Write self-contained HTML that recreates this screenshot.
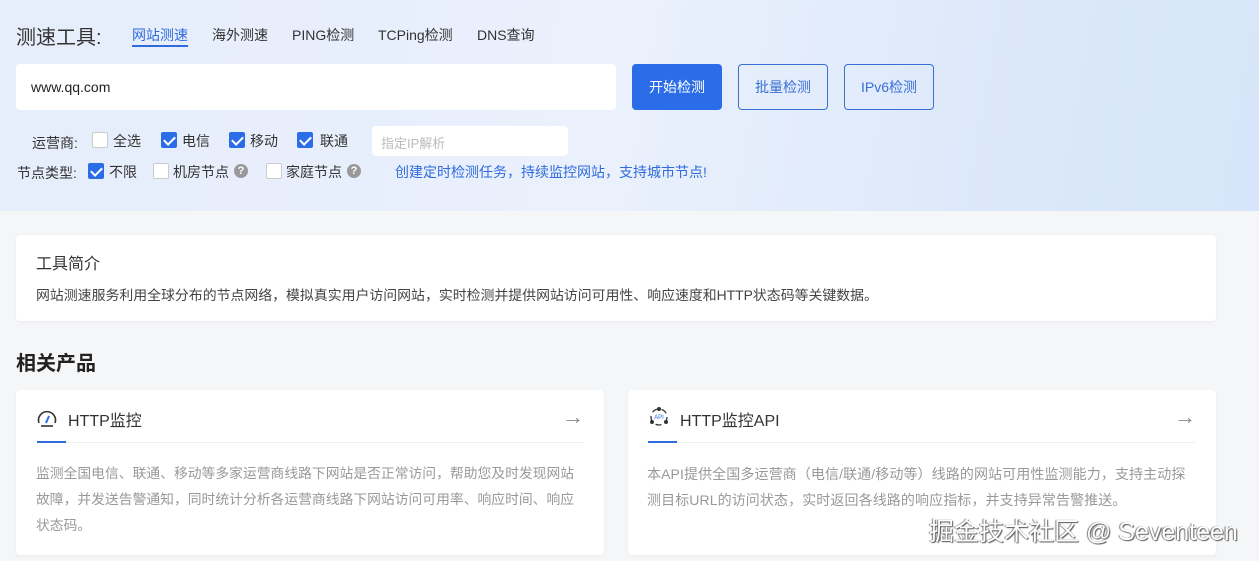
<!DOCTYPE html>
<html><head><meta charset="utf-8"><style>
*{margin:0;padding:0;box-sizing:border-box}
body{width:1259px;height:561px;overflow:hidden;background:#f5f6f8;font-family:"Liberation Sans","Noto Sans CJK SC",sans-serif;position:relative;color:#333}
.hdr{position:absolute;left:0;top:0;width:1259px;height:211px;background:linear-gradient(100deg,#e6edfb 0%,#eaf0fc 50%,#dbe8fa 80%,#d6e5f9 100%)}
.a{position:absolute;white-space:nowrap}
.cb{position:absolute;width:16px;height:16px;border:1px solid #ccc;background:#fff;border-radius:2px}
.cb.on{background:#2b6de8;border-color:#2b6de8}
.cb.on::after{content:"";position:absolute;left:4px;top:1px;width:5px;height:9px;border:solid #fff;border-width:0 2px 2px 0;transform:rotate(45deg)}
.q{position:absolute;width:14px;height:14px;border-radius:50%;background:#999;color:#fff;font-size:11px;line-height:14px;text-align:center;font-weight:bold}
.btn{position:absolute;top:64px;height:46px;width:90px;border-radius:4px;font-size:14px;line-height:44px;text-align:center}
.card{position:absolute;background:#fff;border-radius:4px;box-shadow:0 1px 4px rgba(0,0,0,.05)}
</style></head><body>
<div class="hdr"></div>
<div class="a" style="left:16px;top:21px;font-size:20px;color:#333">测速工具:</div>
<div class="a" style="left:132px;top:25px;font-size:14px;color:#2f6bdc">网站测速</div>
<div class="a" style="left:132px;top:45px;width:56px;height:2px;background:#2f6bdc"></div>
<div class="a" style="left:212px;top:25px;font-size:14px">海外测速</div>
<div class="a" style="left:292px;top:25px;font-size:14px">PING检测</div>
<div class="a" style="left:378px;top:25px;font-size:14px">TCPing检测</div>
<div class="a" style="left:477px;top:25px;font-size:14px">DNS查询</div>
<div class="a" style="left:16px;top:64px;width:600px;height:46px;background:#fff;border-radius:4px"></div>
<div class="a" style="left:31px;top:79px;font-size:14px;color:#222">www.qq.com</div>
<div class="btn" style="left:632px;background:#2b6de8;color:#fff;border:1px solid #2b6de8">开始检测</div>
<div class="btn" style="left:738px;border:1px solid #3a6fd6;color:#3a6fd6">批量检测</div>
<div class="btn" style="left:844px;border:1px solid #3a6fd6;color:#3a6fd6">IPv6检测</div>
<div class="a" style="left:32px;top:133px;font-size:14px">运营商:</div>
<div class="cb" style="left:92px;top:132px"></div><div class="a" style="left:113px;top:131px;font-size:14px">全选</div>
<div class="cb on" style="left:161px;top:132px"></div><div class="a" style="left:182px;top:131px;font-size:14px">电信</div>
<div class="cb on" style="left:229px;top:132px"></div><div class="a" style="left:250px;top:131px;font-size:14px">移动</div>
<div class="cb on" style="left:297px;top:132px"></div><div class="a" style="left:320px;top:131px;font-size:14px">联通</div>
<div class="a" style="left:372px;top:126px;width:196px;height:30px;background:#fff;border-radius:4px"></div>
<div class="a" style="left:381px;top:133px;font-size:13px;color:#bbb">指定IP解析</div>
<div class="a" style="left:17px;top:163px;font-size:14px">节点类型:</div>
<div class="cb on" style="left:88px;top:163px"></div><div class="a" style="left:109px;top:162px;font-size:14px">不限</div>
<div class="cb" style="left:153px;top:163px"></div><div class="a" style="left:173px;top:162px;font-size:14px">机房节点</div><div class="q" style="left:234px;top:164px">?</div>
<div class="cb" style="left:266px;top:163px"></div><div class="a" style="left:286px;top:162px;font-size:14px">家庭节点</div><div class="q" style="left:347px;top:164px">?</div>
<div class="a" style="left:395px;top:162px;font-size:14px;color:#2f6bdc">创建定时检测任务，持续监控网站，支持城市节点!</div>

<div class="card" style="left:16px;top:235px;width:1200px;height:86px"></div>
<div class="a" style="left:36px;top:250px;font-size:16px">工具简介</div>
<div class="a" style="left:36px;top:285px;font-size:13.9px;color:#444">网站测速服务利用全球分布的节点网络，模拟真实用户访问网站，实时检测并提供网站访问可用性、响应速度和HTTP状态码等关键数据。</div>
<div class="a" style="left:16px;top:347px;font-size:20px;font-weight:bold;color:#222">相关产品</div>

<div class="card" style="left:16px;top:390px;width:588px;height:165px"></div>
<svg class="a" style="left:36px;top:406px" width="22" height="22" viewBox="0 0 22 22"><path d="M3 17A8.5 8.5 0 1 1 19 17" fill="none" stroke="#333" stroke-width="1.6"/><path d="M5 20H17" stroke="#333" stroke-width="1.6"/><path d="M10 17L13 10" stroke="#2b6de8" stroke-width="2"/></svg>
<div class="a" style="left:68px;top:407px;font-size:16px">HTTP监控</div>
<div class="a" style="left:562px;top:404px;font-size:22px;color:#888">→</div>
<div class="a" style="left:37px;top:442px;width:547px;height:1px;background:#eee"></div>
<div class="a" style="left:37px;top:441px;width:29px;height:2px;background:#2f6bdc"></div>
<div class="a" style="left:36px;top:461px;font-size:13.8px;line-height:26px;color:#999">监测全国电信、联通、移动等多家运营商线路下网站是否正常访问，帮助您及时发现网站<br>故障，并发送告警通知，同时统计分析各运营商线路下网站访问可用率、响应时间、响应<br>状态码。</div>

<div class="card" style="left:628px;top:390px;width:588px;height:165px"></div>
<svg class="a" style="left:648px;top:406px" width="22" height="22" viewBox="0 0 22 22"><circle cx="11" cy="11" r="8" fill="none" stroke="#333" stroke-width="1.3" stroke-dasharray="6 4"/><circle cx="11" cy="3" r="2" fill="#333"/><circle cx="4" cy="16" r="2" fill="#333"/><circle cx="18" cy="16" r="2" fill="#333"/><text x="11" y="13" font-size="6" text-anchor="middle" fill="#2b6de8" font-family="Liberation Sans">API</text></svg>
<div class="a" style="left:680px;top:407px;font-size:16px">HTTP监控API</div>
<div class="a" style="left:1174px;top:404px;font-size:22px;color:#888">→</div>
<div class="a" style="left:648px;top:442px;width:547px;height:1px;background:#eee"></div>
<div class="a" style="left:648px;top:441px;width:29px;height:2px;background:#2f6bdc"></div>
<div class="a" style="left:647px;top:461px;font-size:14px;letter-spacing:0.1px;line-height:26px;color:#999">本API提供全国多运营商（电信/联通/移动等）线路的网站可用性监测能力，支持主动探<br>测目标URL的访问状态，实时返回各线路的响应指标，并支持异常告警推送。</div>

<div class="a" style="left:929px;top:512px;font-size:25px;color:#fff;text-shadow:1px 1px 1px #555,-1px 0 1px #777">掘金技术社区 @ Seventeen</div>
</body></html>
